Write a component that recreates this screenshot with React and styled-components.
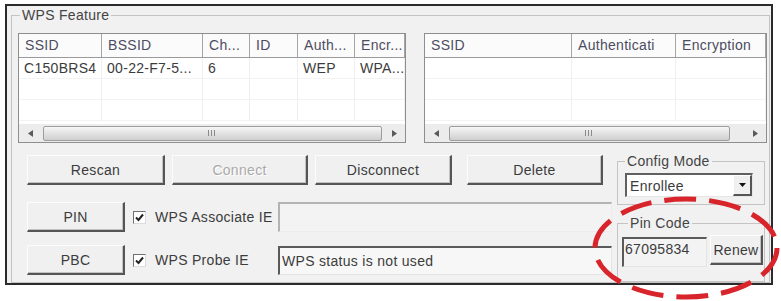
import React from "react";
import styled, { createGlobalStyle } from "styled-components";

const GlobalStyle = createGlobalStyle`
  body {
    margin: 0;
    background: #fff;
    font-family: "Liberation Sans", Arial, sans-serif;
  }
`;

const Page = styled.div`
  position: relative;
  width: 781px;
  height: 301px;
  overflow: hidden;
  box-sizing: border-box;
  padding: 4px 0 0 5px;
`;

const Window = styled.div`
  width: 768px;
  height: 281px;
  box-sizing: border-box;
  border: 2px solid #2b2b2b;
  background: #f1f1f1;
  padding: 2px 1px 0 4px;
  font-size: 14px;
  letter-spacing: 0.3px;
  color: #3c3c3c;
`;

const Group = styled.fieldset`
  margin: 0;
  margin-top: ${(p) => p.$top || 0}px;
  padding: ${(p) => p.$pad};
  width: ${(p) => p.$w}px;
  height: ${(p) => (p.$h ? `${p.$h}px` : "auto")};
  box-sizing: border-box;
  border: 1px solid #c4c4c4;
  min-width: 0;
`;

const Legend = styled.legend`
  margin-left: ${(p) => p.$indent || 0}px;
  padding: 0 2px;
  font-size: 14px;
  line-height: 14px;
  color: #444;
`;

const ListsRow = styled.div`
  display: flex;
  gap: 18px;
  height: 110px;
`;

const ListView = styled.div`
  width: ${(p) => p.$w}px;
  height: 110px;
  box-sizing: border-box;
  border: 1px solid #8e8e8e;
  background: #fff;
  display: flex;
  flex-direction: column;
`;

const HeaderRow = styled.div`
  display: grid;
  grid-template-columns: ${(p) => p.$cols};
  height: 24px;
  box-sizing: border-box;
  border-bottom: 1px solid #9a9a9a;
  background: #fbfbfb;
`;

const HeaderCell = styled.div`
  padding-left: 6px;
  line-height: 23px;
  border-right: 1px solid #a5a5a5;
  white-space: nowrap;
  overflow: hidden;
  color: #4d4d62;
`;

const Body = styled.div`
  flex: 1;
  display: grid;
  grid-template-columns: ${(p) => p.$cols};
  grid-auto-rows: 21px;
  overflow: hidden;
`;

const BodyCell = styled.div`
  padding-left: 5px;
  line-height: 21px;
  border-right: 1px solid #efefef;
  border-bottom: 1px solid #f3f3f3;
  white-space: nowrap;
  overflow: hidden;
`;

const ScrollBar = styled.div`
  height: 18px;
  display: flex;
  align-items: center;
  background: #ececec;
`;

const ScrollArrow = styled.div`
  width: 22px;
  height: 18px;
  display: flex;
  align-items: center;
  justify-content: center;
  flex: none;
`;

const Track = styled.div`
  flex: 1;
  height: 16px;
  display: flex;
  align-items: center;
`;

const Thumb = styled.div`
  width: ${(p) => p.$w}px;
  height: 15px;
  margin-left: 2px;
  box-sizing: border-box;
  border: 1px solid #9d9d9d;
  border-radius: 2px;
  background: linear-gradient(#f6f6f6, #e2e2e2 50%, #cfcfcf);
  display: flex;
  align-items: center;
  justify-content: center;
`;

const Grip = styled.div`
  width: 9px;
  height: 6px;
  background: repeating-linear-gradient(90deg, #8a8a8a 0 1px, transparent 1px 3px);
`;

const Bottom = styled.div`
  display: grid;
  grid-template-columns: 599px 148px;
`;

const LeftCol = styled.div`
  display: flex;
  flex-direction: column;
`;

const RightCol = styled.div`
  display: flex;
  flex-direction: column;
  padding-top: 11px;
`;

const ButtonRow = styled.div`
  display: flex;
  gap: 7px;
  margin-top: 12px;
  padding-left: 9px;
`;

const Button = styled.button`
  width: ${(p) => p.$w}px;
  height: 30px;
  margin-left: ${(p) => p.$ml || 0}px;
  margin-top: ${(p) => p.$mt || 0}px;
  flex: none;
  box-sizing: border-box;
  padding: 0;
  font: inherit;
  letter-spacing: inherit;
  color: ${(p) => (p.disabled ? "#aaaaaa" : "#3c3c3c")};
  text-shadow: ${(p) => (p.disabled ? "1px 1px 0 #fff" : "none")};
  background: #f0f0f0;
  border-style: solid;
  border-width: 1px 2px 2px 1px;
  border-color: #fcfcfc #555 #555 #fcfcfc;
  box-shadow: inset -1px -1px 0 #c2c2c2;
`;

const OptionRow = styled.div`
  display: grid;
  grid-template-columns: 98px 153px 334px;
  align-items: center;
  margin-top: ${(p) => p.$top}px;
  padding-left: 9px;
`;

const CheckWrap = styled.label`
  display: flex;
  align-items: center;
  gap: 9px;
  padding-left: 8px;
  white-space: nowrap;
`;

const CheckBox = styled.span`
  width: 13px;
  height: 13px;
  box-sizing: border-box;
  border-style: solid;
  border-width: 1px;
  border-color: #707070 #dcdcdc #dcdcdc #707070;
  background: #fff;
  display: flex;
  align-items: center;
  justify-content: center;
`;

const TextBox = styled.div`
  height: ${(p) => p.$h}px;
  width: ${(p) => (p.$w ? `${p.$w}px` : "auto")};
  box-sizing: border-box;
  border-style: solid;
  border-width: 2px 1px 1px 2px;
  border-color: ${(p) =>
    p.$dark ? "#5a5a5a #e4e4e4 #e4e4e4 #5a5a5a" : "#b3b3b3 #ececec #ececec #b3b3b3"};
  background: ${(p) => p.$bg || "#f3f3f3"};
  padding: ${(p) => p.$pad || "0 2px"};
  display: flex;
  align-items: ${(p) => p.$align || "center"};
  white-space: nowrap;
  overflow: hidden;
`;

const Combo = styled.div`
  width: 128px;
  height: 24px;
  box-sizing: border-box;
  border-style: solid;
  border-width: 2px 1px 1px 2px;
  border-color: #606060 #e6e6e6 #e6e6e6 #606060;
  background: #fff;
  display: flex;
  align-items: center;
  padding-left: 3px;
`;

const ComboButton = styled.div`
  margin-left: auto;
  width: 19px;
  height: 100%;
  box-sizing: border-box;
  background: #f0f0f0;
  border-style: solid;
  border-width: 1px 2px 2px 1px;
  border-color: #fff #555 #555 #fff;
  display: flex;
  align-items: center;
  justify-content: center;
`;

const PinRow = styled.div`
  display: flex;
  gap: 3px;
  align-items: flex-start;
`;

const Annotation = styled.svg`
  position: absolute;
  left: 0;
  top: 0;
  pointer-events: none;
`;

const Arrow = ({ dir }) => (
  <svg width="5" height="7" viewBox="0 0 5 7">
    <polygon points={dir === "left" ? "5,0 0,3.5 5,7" : "0,0 5,3.5 0,7"} fill="#5a5a5a" />
  </svg>
);

const List = ({ width, cols, headers, rows, thumb }) => (
  <ListView $w={width}>
    <HeaderRow $cols={cols}>
      {headers.map((h, i) => (
        <HeaderCell key={i}>{h}</HeaderCell>
      ))}
    </HeaderRow>
    <Body $cols={cols}>
      {rows.map((r, ri) =>
        r.map((c, ci) => <BodyCell key={`${ri}-${ci}`}>{c}</BodyCell>)
      )}
    </Body>
    <ScrollBar>
      <ScrollArrow>
        <Arrow dir="left" />
      </ScrollArrow>
      <Track>
        <Thumb $w={thumb}>
          <Grip />
        </Thumb>
      </Track>
      <ScrollArrow>
        <Arrow dir="right" />
      </ScrollArrow>
    </ScrollBar>
  </ListView>
);

const Check = ({ label }) => (
  <CheckWrap>
    <CheckBox>
      <svg width="9" height="9" viewBox="0 0 9 9">
        <path d="M1 4.5 L3.5 7 L8 1.5" stroke="#222" strokeWidth="2" fill="none" />
      </svg>
    </CheckBox>
    {label}
  </CheckWrap>
);

const networkCols = "83px 101px 47px 48px 57px 1fr";
const profileCols = "147px 104px 1fr";

export default function App() {
  return (
    <Page>
      <GlobalStyle />
      <Window>
        <Group $w={759} $h={275} $pad="11px 2px 0 6px">
          <Legend $indent={2}>WPS Feature</Legend>
          <ListsRow>
            <List
              width={388}
              cols={networkCols}
              headers={["SSID", "BSSID", "Ch...", "ID", "Auth...", "Encr..."]}
              rows={[
                ["C150BRS4", "00-22-F7-5...", "6", "", "WEP", "WPA..."],
                ["", "", "", "", "", ""],
                ["", "", "", "", "", ""],
              ]}
              thumb={339}
            />
            <List
              width={343}
              cols={profileCols}
              headers={["SSID", "Authenticati", "Encryption"]}
              rows={[
                ["", "", ""],
                ["", "", ""],
                ["", "", ""],
              ]}
              thumb={281}
            />
          </ListsRow>
          <Bottom>
            <LeftCol>
              <ButtonRow>
                <Button $w={138}>Rescan</Button>
                <Button $w={136} disabled>
                  Connect
                </Button>
                <Button $w={137}>Disconnect</Button>
                <Button $w={136} $ml={8}>
                  Delete
                </Button>
              </ButtonRow>
              <OptionRow $top={17}>
                <Button $w={98}>PIN</Button>
                <Check label="WPS Associate IE" />
                <TextBox $h={30} />
              </OptionRow>
              <OptionRow $top={13}>
                <Button $w={98}>PBC</Button>
                <Check label="WPS Probe IE" />
                <TextBox $h={29} $dark $bg="#f7f7f7">
                  WPS status is not used
                </TextBox>
              </OptionRow>
            </LeftCol>
            <RightCol>
              <Group $w={148} $pad="5px 0 7px 7px">
                <Legend>Config Mode</Legend>
                <Combo>
                  Enrollee
                  <ComboButton>
                    <svg width="7" height="4" viewBox="0 0 7 4">
                      <polygon points="0,0 7,0 3.5,4" fill="#111" />
                    </svg>
                  </ComboButton>
                </Combo>
              </Group>
              <Group $w={148} $h={66} $top={11} $pad="7px 0 0 4px">
                <Legend $indent={6}>Pin Code</Legend>
                <PinRow>
                  <TextBox $h={30} $w={85} $dark $align="flex-start" $pad="2px 1px 0">
                    67095834
                  </TextBox>
                  <Button $w={53} $mt={-2}>
                    Renew
                  </Button>
                </PinRow>
              </Group>
            </RightCol>
          </Bottom>
        </Group>
      </Window>
      <Annotation width="781" height="301" viewBox="0 0 781 301">
        <ellipse
          cx="686"
          cy="248"
          rx="91"
          ry="49"
          fill="none"
          stroke="#d8242b"
          strokeWidth="5"
          strokeDasharray="32 13"
        />
      </Annotation>
    </Page>
  );
}
